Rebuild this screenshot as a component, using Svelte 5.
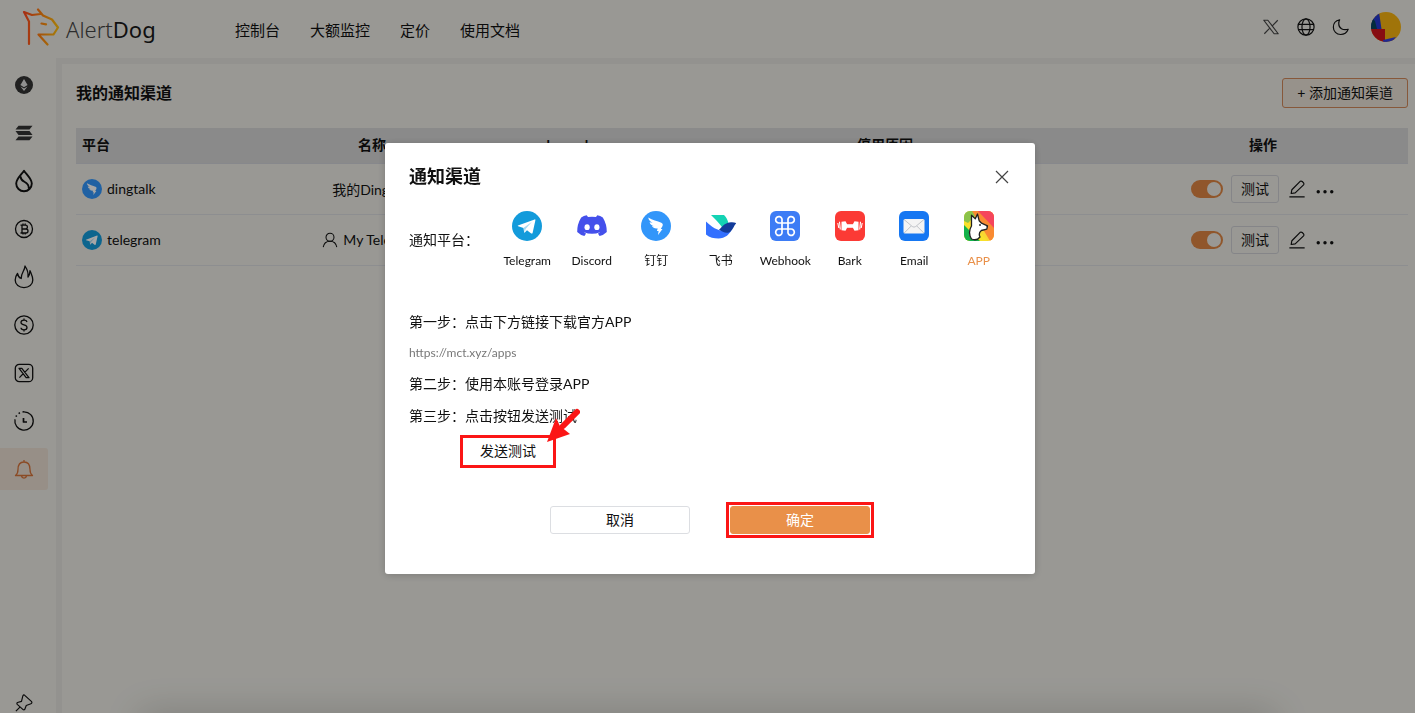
<script lang="ts">
  type Platform = { id: string; label: string };

  const nav = ['控制台', '大额监控', '定价', '使用文档'];

  const sideItems = [
    { id: 'eth', label: 'Ethereum' },
    { id: 'sol', label: 'Solana' },
    { id: 'sui', label: 'Sui' },
    { id: 'btc', label: 'Bitcoin' },
    { id: 'fire', label: 'Hot' },
    { id: 'usd', label: 'Price' },
    { id: 'x', label: 'X' },
    { id: 'clock', label: 'History' },
    { id: 'bell', label: 'Channels' },
  ];

  const platforms: Platform[] = [
    { id: 'telegram', label: 'Telegram' },
    { id: 'discord', label: 'Discord' },
    { id: 'dingtalk', label: '钉钉' },
    { id: 'feishu', label: '飞书' },
    { id: 'webhook', label: 'Webhook' },
    { id: 'bark', label: 'Bark' },
    { id: 'email', label: 'Email' },
    { id: 'app', label: 'APP' },
  ];

  let rows = $state([
    { platform: 'dingtalk', name: '我的DingTalk', user: false, enabled: true },
    { platform: 'telegram', name: 'My Telegram', user: true, enabled: true },
  ]);

  let active = $state('bell');
  let selected = $state('app');
  let open = $state(true);
</script>

{#snippet platformIcon(id: string)}
  <svg class="platform-icon" viewBox="0 0 30 30" aria-hidden="true">
    {#if id === 'telegram'}
      <circle cx="15" cy="15" r="15" fill="#139bdb" />
      <path d="M6 14.6 22.6 8.4q1-.2.8.9l-2.8 12.6q-.3 1.1-1.4.5l-4.2-3.1-2.2 2.3q-.6.3-.7-.4l-.6-4.2-5.3-1.7q-.9-.4-.2-.7Z" fill="#fff" />
      <path d="m11.7 16.8 8.3-6-6.4 7.3-.7 3.4Z" fill="#a9daf1" />
    {:else if id === 'discord'}
      <path d="M9.7 4.2 11 6.1q4-.7 8 0l1.3-1.9q3 .4 5.5 2.2 4.1 6.7 4 14.7-3 3-7.2 4l-1.7-2.6q1.3-.5 2.2-1.2-8 3-16.2 0 .9.7 2.2 1.2L7.4 25.1q-4.2-1-7.2-4-.2-8 4-14.7 2.5-1.8 5.5-2.2Z" fill="#4450eb" />
      <ellipse cx="10.1" cy="16.2" rx="2.6" ry="2.9" fill="#fff" />
      <ellipse cx="19.9" cy="16.2" rx="2.6" ry="2.9" fill="#fff" />
    {:else if id === 'dingtalk'}
      <circle cx="15" cy="15" r="15" fill="#3296fa" />
      <path d="M7.300 6.500c4 2.500 9 3.500 13 5.300 1.700.8 1.800 2 1.100 3.400l-1.600 2.900h1.700l-4.500 5.800.6-3.900h-1.700l.8-2.500c-3.200.3-4.700-.5-5.800-2.400l2.600.1c-2.800-.7-4.400-1.900-4.900-4l3 .5C9 10.500 7.500 8.900 7.300 6.500Z" fill="#fff" />
    {:else if id === 'feishu'}
      <path d="M5 4h13c2.300 2.200 3.800 5.200 4.500 8.500-2.300.8-4 2.300-6 4.300C13 12 9 8 5 4Z" fill="#14d3b4" />
      <path d="M0 10.500c5 5 11.500 9.500 19 9.500 3 0 5.500-1.200 7.500-3.500C24 23.500 19 27.500 12.500 27.500c-4.500 0-9-1-12.500-4Z" fill="#3370ff" />
      <path d="M13 18.700c4-4 7-8 13-7.500 1.700 0 3 .3 4.200 1-2.200 2-3 5.800-5.600 8.200-3.400 3-8.200.3-11.600-1.700Z" fill="#133c9a" />
    {:else if id === 'webhook'}
      <rect width="30" height="30" rx="6" fill="#3d7cf5" />
      <path d="M12 12h6v6h-6ZM12 12V9.500a3.200 3.200 0 1 0-3.200 2.500ZM18 12V9.500a3.200 3.200 0 1 1 3.200 2.500ZM12 18v2.500a3.200 3.200 0 1 1-3.200-2.500ZM18 18v2.500a3.200 3.200 0 1 0 3.200-2.500Z" fill="none" stroke="#fff" stroke-width="1.700" />
    {:else if id === 'bark'}
      <rect width="30" height="30" rx="6" fill="#fb3a35" />
      <path d="M11 13.200h8v3.600h-8Z" fill="#fff" />
      <path d="m6.500 10.800 4-.6 1.500 2.800v4l-1.500 2.800-4-.6ZM23.500 10.800l-4-.6-1.500 2.800v4l1.500 2.800 4-.6Z" fill="#fff" />
      <path d="m2.800 12 1 5m.7-6.200.8 7.700M27.200 12l-1 5m-.7-6.200-.8 7.700" stroke="#fff" stroke-width="1.100" />
    {:else if id === 'email'}
      <rect width="30" height="30" rx="6" fill="#1677f2" />
      <rect x="4.500" y="8" width="21" height="14.500" rx="1.500" fill="#f4f4f4" />
      <path d="m5 8.500 8.300 7q1.700 1.300 3.400 0l8.300-7M5.200 22l7-7m12.600 7-7-7" fill="none" stroke="#b4b8be" stroke-width=".8" />
    {:else}
      <clipPath id="app-clip"><rect width="30" height="30" rx="6" /></clipPath>
      <g clip-path="url(#app-clip)">
        <rect width="30" height="30" fill="#f9d532" />
        <path d="M0 0h16L0 16Z" fill="#8bc34a" />
        <path d="M8 0h22v30h-4Z" fill="#f98a32" />
        <path d="M0 10v20h24L8 14Z" fill="#f8e02b" />
        <path d="M0 14v16h16Z" fill="#13b24b" />
        <path d="M14 0h16v17Z" fill="#f5455c" />
      </g>
      <path d="M7.500 28c-3-5-2.500-9 0-13V4.200l3.800 3.600L13.500 3l1.700 6.800 2.300 2.400 6 2.700-.7 3.300-5.500 1.300c-2 1.500-2.700 3.500-1.300 6.500-2 2.500-5.500 3.300-8.500 2Z" fill="#fff" stroke="#222" stroke-width="1.300" stroke-linejoin="round" />
      <circle cx="16" cy="14" r=".9" fill="#222" />
      <path d="m22 14.800 1.700.3-.4 1.500Z" fill="#222" />
    {/if}
  </svg>
{/snippet}

{#snippet xLogo()}
  <path d="M2 2.500h4.500L18 17.500h-4.500ZM17.500 2.500l-6.300 6.600M8.600 11.200l-6 6.300" />
{/snippet}

{#snippet sideIcon(id: string)}
  <svg class="line-icon" viewBox="0 0 20 20" aria-hidden="true">
    {#if id === 'eth'}
      <circle cx="10" cy="10" r="9" fill="#333" stroke="none" />
      <path d="m10 4 3.600 6-3.600 2.200L6.400 10Z" fill="#ddd" stroke="none" />
      <path d="m6.500 11.400 3.500 2 3.500-2L10 16Z" fill="#ddd" stroke="none" />
    {:else if id === 'sol'}
      <g fill="#333" stroke="none">
        <path d="M4.500 2.800h14l-3 3.800h-14Z" />
        <path d="M1.500 8.100h14l3 3.800h-14Z" />
        <path d="M4.500 13.400h14l-3 3.800h-14Z" />
      </g>
    {:else if id === 'sui'}
      <path stroke-width="1.900" d="M10-.2C13 4 17.800 8.200 17.800 12.500a7.800 7.800 0 0 1-15.600 0C2.200 8.200 7 4 10-.2ZM6.800 5.500c-.8 6.500 8.500 4 8 12" />
    {:else if id === 'btc'}
      <circle cx="10" cy="10" r="8.500" />
      <path d="M6.500 6.200h5a1.900 1.900 0 0 1 0 3.800H8h4a2 2 0 0 1 0 4H6.500M8 6.200V14M9 4.500v1.700m2.200-1.700v1.700M9 14v1.600m2.200-1.600v1.600" />
    {:else if id === 'fire'}
      <path d="M3.500 6.500C1.700 9 1.200 11 1.200 13c0 4.800 3.900 7.600 8.800 7.600s8.800-2.800 8.800-7.600c0-3.500-1.500-6-2.800-9.300-.2 3-.8 5-2 6.300C14.500 6 13 2 11-1c-.2 5-3.700 6-3.800 12.500-2-.7-3.200-2.500-3.700-5Z" />
    {:else if id === 'usd'}
      <circle cx="10" cy="10" r="9.200" />
      <path d="M13 7c-.3-1.200-1.500-1.800-3-1.800s-3 .8-3 2.300c0 3.300 6 1.600 6 5 0 1.500-1.500 2.300-3 2.300s-2.900-.7-3-2M10 3.500v1.700m0 9.600v1.700" />
    {:else if id === 'x'}
      <rect x="1.300" y="1.300" width="17.400" height="17.400" rx="4" />
      <g transform="translate(3.800 3.800) scale(.62)" stroke-width="2">{@render xLogo()}</g>
    {:else if id === 'clock'}
      <path d="M10 .8a9.200 9.200 0 1 1-9 7.500" />
      <path d="M10 .8a9.200 9.200 0 0 0-9 7.500" stroke-width="1.600" stroke-dasharray="1.500 2.700" />
      <path d="M9.500 7v4h3.500" stroke-width="1.700" />
    {:else}
      <path d="M1.500 16.500h17c-2-1.500-2.500-3-2.500-6 0-5-2.300-7.500-6-7.500s-6 2.500-6 7.500c0 3-.5 4.500-2.500 6ZM10 3V1M7.500 17c.4 1.600 1.200 2.200 2.500 2.200s2.100-.6 2.500-2.200" />
    {/if}
  </svg>
{/snippet}

<div class="page" inert={open}>
  <header class="topbar">
    <a class="logo" href="#home">
      <svg class="logo-mark" viewBox="0 0 38 40" aria-hidden="true">
        <defs>
          <linearGradient id="logo-grad" x1="0" x2="1">
            <stop offset="0" stop-color="#ff4a20" />
            <stop offset=".55" stop-color="#ff8a10" />
            <stop offset="1" stop-color="#ffc010" />
          </linearGradient>
        </defs>
        <path d="M7 36V13.500L2 4l8 3 8.500-1M16 1.500l5 6 9 4 6 8-4.500 7H16.500l9 10M19.500 15.500l4.500.8" fill="none" stroke="url(#logo-grad)" stroke-width="2.200" stroke-linecap="round" stroke-linejoin="round" />
      </svg>
      <span class="logo-text"><span>Alert</span>Dog</span>
    </a>
    <nav class="nav">
      {#each nav as item}
        <a href="#nav">{item}</a>
      {/each}
    </nav>
    <div class="tools">
      <button class="icon-btn x-btn" aria-label="X">
        <svg class="line-icon" viewBox="0 0 20 20">{@render xLogo()}</svg>
      </button>
      <button class="icon-btn" aria-label="Language">
        <svg class="line-icon" viewBox="0 0 20 20">
          <circle cx="10" cy="10" r="9" />
          <ellipse cx="10" cy="10" rx="4.500" ry="9" />
          <path d="M1.600 7h16.800M1.600 13h16.800" />
        </svg>
      </button>
      <button class="icon-btn" aria-label="Theme">
        <svg class="line-icon" viewBox="0 0 20 20">
          <path d="M8.500 2C3.800 3 1.500 6.500 1.500 10.300c0 4.500 3.500 8 8 8 4 0 7-2 8.500-5.800-6 1.500-10.500-1-10.500-6 0-1.700.3-3.100 1-4.500Z" />
        </svg>
      </button>
      <button class="icon-btn avatar" aria-label="Account">
        <svg viewBox="0 0 30 30">
          <clipPath id="avatar-clip"><circle cx="15" cy="15" r="15" /></clipPath>
          <g clip-path="url(#avatar-clip)">
            <rect width="30" height="30" fill="#f6b210" />
            <path d="M0 0h8l2.500 17H0Z" fill="#2438cf" />
            <path d="M0 5 4 9l2 8H0Z" fill="#05445e" />
            <path d="M0 17h14v13H0Z" fill="#d0141d" />
            <path d="m12 28 13-3-4 5h-9Z" fill="#3440dd" />
          </g>
        </svg>
      </button>
    </div>
  </header>

  <div class="body">
    <aside class="sidebar">
      {#each sideItems as item}
        <button
          class="side-item"
          class:active={active === item.id}
          aria-label={item.label}
          onclick={() => (active = item.id)}
        >
          {@render sideIcon(item.id)}
        </button>
      {/each}
      <button class="side-item pin" aria-label="Pin">
        <svg class="line-icon" viewBox="0 0 20 20">
          <path d="m10.500 1.200 8 7.300q.8 1.700-.8 2.300l-5.200 2-1.700 4.400q-.8 1-1.800.2L2.500 11.500q-.9-1.200.3-2l4.400-1.300 1.600-6.300q.6-1.200 1.700-.7ZM5.500 14.500 1 19" />
        </svg>
      </button>
    </aside>

    <main class="content">
      <div class="content-head">
        <h1>我的通知渠道</h1>
        <button class="add-btn">+ 添加通知渠道</button>
      </div>
      <table>
        <thead>
          <tr>
            <th>平台</th>
            <th>名称</th>
            <th>channel</th>
            <th>停用原因</th>
            <th>操作</th>
          </tr>
        </thead>
        <tbody>
          {#each rows as row}
            <tr>
              <td>
                <span class="cell">{@render platformIcon(row.platform)}{row.platform}</span>
              </td>
              <td>
                <span class="cell name">
                  {#if row.user}
                    <svg class="line-icon user" viewBox="0 0 20 20" aria-hidden="true">
                      <circle cx="10" cy="6.500" r="5" />
                      <path d="M1.500 19c.7-4.500 3.500-7.500 8.500-7.500s7.800 3 8.500 7.500" />
                    </svg>
                  {/if}
                  {row.name}
                </span>
              </td>
              <td></td>
              <td></td>
              <td>
                <span class="cell actions">
                  <input class="switch" type="checkbox" aria-label="启用 {row.name}" bind:checked={row.enabled} />
                  <button class="test-btn">测试</button>
                  <button class="icon-btn" aria-label="编辑">
                    <svg class="line-icon" viewBox="0 0 20 20">
                      <path d="M3.500 15 4.300 10.800 13.500 1.500q1.200-.8 2.300.2l1.500 1.500q.9 1.200 0 2.300L8 14.300ZM1.500 18.800h17" />
                    </svg>
                  </button>
                  <button class="icon-btn" aria-label="更多">
                    <svg class="dots" viewBox="0 0 20 20">
                      <circle cx="2.500" cy="13" r="1.900" /><circle cx="10" cy="13" r="1.900" /><circle cx="17.500" cy="13" r="1.900" />
                    </svg>
                  </button>
                </span>
              </td>
            </tr>
          {/each}
        </tbody>
      </table>
    </main>
  </div>
  <div class="dock-shade"></div>
</div>

{#if open}
  <div class="overlay">
    <div class="modal" role="dialog" aria-modal="true" aria-labelledby="modal-title">
      <div class="modal-head">
        <h2 id="modal-title">通知渠道</h2>
        <button class="icon-btn close" aria-label="关闭" onclick={() => (open = false)}>
          <svg viewBox="0 0 14 14"><path d="m1 1 12 12M13 1 1 13" /></svg>
        </button>
      </div>

      <div class="picker">
        <span class="picker-label">通知平台：</span>
        <div class="platforms">
          {#each platforms as p}
            <button class="platform" class:selected={selected === p.id} onclick={() => (selected = p.id)}>
              {@render platformIcon(p.id)}
              <span>{p.label}</span>
            </button>
          {/each}
        </div>
      </div>

      <div class="steps">
        <p>第一步：点击下方链接下载官方APP</p>
        <a href="https://mct.xyz/apps">https://mct.xyz/apps</a>
        <p>第二步：使用本账号登录APP</p>
        <p>第三步：点击按钮发送测试</p>
        <div class="send">
          <button class="btn send-btn">发送测试</button>
          <svg class="arrow" viewBox="0 0 34 34" aria-hidden="true">
            <path d="M31 4 17 18" stroke="#fb1616" stroke-width="6" stroke-linecap="round" />
            <path d="m1 34 9-24 4 8 10 8Z" fill="#fb1616" />
          </svg>
        </div>
      </div>

      <div class="modal-foot">
        <button class="btn" onclick={() => (open = false)}>取消</button>
        <button class="btn primary">确定</button>
      </div>
    </div>
  </div>
{/if}

<style>
  :global(body) {
    margin: 0;
    background: #ebeae4;
    font-family: Lato, 'Noto Sans CJK SC', sans-serif;
    font-size: 14px;
    color: #111;
  }

  h1,
  h2,
  p {
    margin: 0;
  }

  button {
    font: inherit;
    color: inherit;
    cursor: pointer;
  }

  a {
    color: inherit;
    text-decoration: none;
  }

  svg {
    display: block;
  }

  .line-icon {
    width: 20px;
    height: 20px;
    fill: none;
    stroke: currentColor;
    stroke-width: 1.3;
    stroke-linejoin: round;
    overflow: visible;
  }

  .icon-btn {
    padding: 0;
    border: none;
    background: none;
  }

  .page {
    position: relative;
    height: 100vh;
    display: flex;
    flex-direction: column;
    overflow: hidden;
  }

  .topbar {
    display: flex;
    align-items: center;
    height: 58px;
    padding: 0 14px 0 22px;
    flex-shrink: 0;
  }

  .logo {
    display: flex;
    align-items: center;
    gap: 6px;
    width: 213px;
  }

  .logo-mark {
    width: 38px;
    height: 40px;
    margin-bottom: 2px;
  }

  .logo-text {
    font-family: 'Noto Sans', sans-serif;
    font-size: 22px;
    line-height: 28px;
    color: #1a1a1a;
  }

  .logo-text span {
    font-weight: 300;
    color: #444;
  }

  .nav {
    display: flex;
    gap: 30px;
    font-size: 15px;
  }

  .tools {
    display: flex;
    align-items: center;
    gap: 17px;
    margin: 0 0 4px auto;
  }

  .tools .line-icon {
    width: 18px;
    height: 18px;
  }

  .x-btn {
    color: #444;
  }

  .avatar {
    width: 30px;
    height: 30px;
    margin-left: 4px;
  }

  .body {
    display: flex;
    flex: 1;
    min-height: 0;
  }

  .sidebar {
    display: flex;
    flex-direction: column;
    gap: 6px;
    width: 56px;
    padding: 6px 0 0;
    box-sizing: border-box;
    flex-shrink: 0;
  }

  .side-item {
    display: flex;
    align-items: center;
    justify-content: center;
    width: 48px;
    height: 42px;
    padding: 0;
    border: none;
    border-radius: 0 3px 3px 0;
    background: none;
    flex-shrink: 0;
  }

  .side-item.active {
    background: #e8dccf;
    color: #d6733a;
  }

  .pin {
    height: 20px;
    margin-top: auto;
  }

  .pin .line-icon {
    width: 18px;
    height: 18px;
  }

  .content {
    flex: 1;
    padding: 14px 7px 0 14px;
    border: solid #e2e1dc;
    border-width: 6px 0 0 6px;
  }

  .content-head {
    display: flex;
    align-items: center;
    justify-content: space-between;
    margin-bottom: 20px;
  }

  h1 {
    padding-bottom: 2px;
    font-size: 16px;
    font-weight: 700;
  }

  .add-btn {
    height: 30px;
    padding: 0 14px 2px;
    border: 1px solid #cf875a;
    border-radius: 3px;
    background: #e9e1d6;
  }

  table {
    width: 100%;
    table-layout: fixed;
    border-collapse: collapse;
  }

  th {
    box-sizing: border-box;
    height: 35px;
    padding: 0 6px 2px;
    border-bottom: 1px solid #d0d1d8;
    background: #d5d5d5;
    font-weight: 700;
  }

  th:nth-child(1) {
    width: 192px;
    text-align: left;
  }

  th:nth-child(2) {
    width: 208px;
  }

  th:nth-child(3) {
    width: 176px;
  }

  th:nth-child(4) {
    width: 35%;
  }

  td {
    height: 50px;
    padding: 0 6px;
    border-bottom: 1px solid #d9dadd;
  }

  .cell {
    display: flex;
    align-items: center;
    gap: 5px;
    white-space: nowrap;
  }

  .cell .platform-icon {
    width: 20px;
    height: 20px;
  }

  .cell.name,
  .cell.actions {
    justify-content: center;
  }

  .user {
    width: 16px;
    height: 16px;
  }

  .cell.actions {
    gap: 8px;
  }

  .actions .line-icon,
  .dots {
    width: 20px;
    height: 18px;
  }

  .dots {
    fill: #111;
  }

  .switch {
    appearance: none;
    width: 32px;
    height: 18px;
    margin: 0;
    padding: 2px;
    border-radius: 9px;
    background: #999;
    cursor: pointer;
  }

  .switch::before {
    content: '';
    display: block;
    width: 14px;
    height: 14px;
    border-radius: 50%;
    background: #ebeae4;
  }

  .switch:checked {
    background: #dd8542;
  }

  .switch:checked::before {
    margin-left: auto;
  }

  .test-btn {
    width: 48px;
    height: 28px;
    padding: 0 0 2px;
    border: 1px solid #cccdd2;
    border-radius: 3px;
    background: none;
  }

  .dock-shade {
    position: absolute;
    bottom: -20px;
    left: 150px;
    right: 150px;
    height: 10px;
    box-shadow: 0 0 36px 10px rgba(0, 0, 0, 0.18);
  }

  .overlay {
    position: fixed;
    inset: 0;
    display: flex;
    align-items: flex-start;
    justify-content: center;
    padding: 20vh 0 0 5px;
    background: rgba(0, 0, 0, 0.35);
  }

  .modal {
    width: 650px;
    max-width: 100%;
    padding: 20px 24px 40px;
    box-sizing: border-box;
    border-radius: 3px;
    background: #fff;
    box-shadow: 0 1px 8px rgba(0, 0, 0, 0.2);
  }

  .modal-head {
    display: flex;
    align-items: center;
    justify-content: space-between;
    height: 28px;
    margin-bottom: 20px;
  }

  h2 {
    padding-bottom: 4px;
    font-size: 18px;
    font-weight: 700;
  }

  .close {
    padding: 2px;
  }

  .close svg {
    width: 14px;
    height: 14px;
    fill: none;
    stroke: #444;
    stroke-width: 1.2;
  }

  .picker {
    display: flex;
    align-items: center;
  }

  .picker-label {
    width: 86px;
    padding-bottom: 4px;
    flex-shrink: 0;
  }

  .platforms {
    display: flex;
    flex: 1;
  }

  .platform {
    display: flex;
    flex: 1;
    flex-direction: column;
    align-items: center;
    gap: 10px;
    padding: 0;
    border: none;
    background: none;
    font-size: 12px;
    line-height: 20px;
  }

  .platform .platform-icon {
    width: 30px;
    height: 30px;
  }

  .platform.selected {
    color: #e99049;
  }

  .steps {
    display: flex;
    flex-direction: column;
    align-items: flex-start;
    gap: 10px;
    margin-top: 40px;
    line-height: 22px;
  }

  .steps a {
    line-height: 20px;
    font-size: 12px;
    color: #777;
  }

  .send {
    position: relative;
    margin-left: 51px;
    margin-top: -2px;
  }

  .arrow {
    position: absolute;
    left: 86px;
    bottom: 26px;
    width: 34px;
    height: 34px;
  }

  .btn {
    position: relative;
    width: 140px;
    height: 28px;
    padding: 0 0 2px;
    border: 1px solid #dcdee2;
    border-radius: 3px;
    background: #fff;
  }

  .send-btn {
    display: block;
    width: 96px;
    height: 33px;
    padding: 0;
    border: 3px solid #fb1616;
    border-radius: 0;
  }

  .modal-foot {
    display: flex;
    justify-content: center;
    gap: 40px;
    margin-top: 38px;
  }

  .btn.primary {
    border-color: #e99049;
    background: #e99049;
    color: #fff;
  }

  .btn.primary::after {
    content: '';
    position: absolute;
    inset: -5px;
    border: 3px solid #fb1616;
  }
</style>
